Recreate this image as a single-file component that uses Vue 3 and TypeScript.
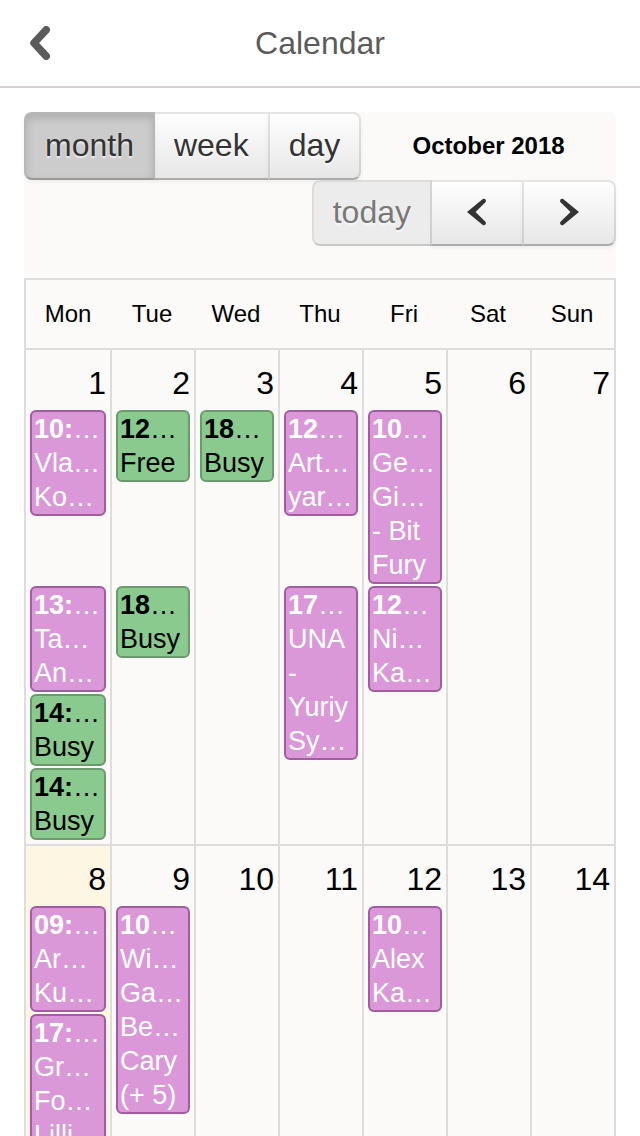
<script setup lang="ts">
import { ref } from 'vue'

interface CalendarEvent {
  time: string
  lines: string[]
  kind: 'meeting' | 'slot'
}

interface Cell {
  day: number
  event?: CalendarEvent
  span: number
}

interface Week {
  days: number[]
  rows: Cell[][]
}

type View = 'month' | 'week' | 'day'

const TODAY = 8
const views: View[] = ['month', 'week', 'day']
const weekdays = ['Mon', 'Tue', 'Wed', 'Thu', 'Fri', 'Sat', 'Sun']
const view = ref<View>('month')

const meeting = (time: string, ...lines: string[]): CalendarEvent => ({ time, lines, kind: 'meeting' })
const slot = (time: string, ...lines: string[]): CalendarEvent => ({ time, lines, kind: 'slot' })

const events: Record<number, CalendarEvent[]> = {
  1: [
    meeting('10:', 'Vla…', 'Ko…'),
    meeting('13:', 'Ta…', 'An…'),
    slot('14:', 'Busy'),
    slot('14:', 'Busy'),
  ],
  2: [slot('12', 'Free'), slot('18', 'Busy')],
  3: [slot('18', 'Busy')],
  4: [meeting('12', 'Art…', 'yar…'), meeting('17', 'UNA', '-', 'Yuriy', 'Sy…')],
  5: [meeting('10', 'Ge…', 'Gi…', '- Bit', 'Fury'), meeting('12', 'Ni…', 'Ka…')],
  8: [meeting('09:', 'Ar…', 'Ku…'), meeting('17:', 'Gr…', 'Fo…', 'Lilli')],
  9: [meeting('10', 'Wi…', 'Ga…', 'Be…', 'Cary', '(+ 5)')],
  12: [meeting('10', 'Alex', 'Ka…')],
}

// The last event of a day spans the remaining rows of its week.
function buildWeek(first: number): Week {
  const days = weekdays.map((_, i) => first + i)
  const depth = Math.max(1, ...days.map((d) => events[d]?.length ?? 0))
  const rows: Cell[][] = []
  for (let r = 0; r < depth; r++) {
    const row: Cell[] = []
    for (const day of days) {
      const list = events[day] ?? []
      const last = Math.max(list.length - 1, 0)
      if (r > last) continue
      row.push({ day, event: list[r], span: r === last ? depth - r : 1 })
    }
    rows.push(row)
  }
  return { days, rows }
}

const weeks = [buildWeek(1), buildWeek(8)]
</script>

<template>
  <div class="page">
    <header class="navbar">
      <button class="back" type="button" aria-label="Back">
        <svg width="20" height="34" viewBox="0 0 20 34" aria-hidden="true">
          <path d="M16.200 3.800 L4 17 L16.200 30.200" />
        </svg>
      </button>
      <h1>Calendar</h1>
    </header>

    <main class="calendar">
      <div class="toolbar">
        <div class="toolbar-row">
          <div class="group views">
            <button
              v-for="v in views"
              :key="v"
              type="button"
              class="btn"
              :class="{ active: view === v }"
              :aria-pressed="view === v"
              @click="view = v"
            >{{ v }}</button>
          </div>
          <h2>October 2018</h2>
        </div>
        <div class="group nav">
          <button type="button" class="btn" disabled>today</button>
          <button type="button" class="btn arrow" aria-label="Previous month">
            <svg width="20" height="28" viewBox="0 0 20 28" aria-hidden="true">
              <path d="M0 14 L15.500 1.200 C17.500 -0.200 19.500 1.500 18.700 4 L8.500 14 L18.700 24 C19.500 26.500 17.500 28.200 15.500 26.800 Z" />
            </svg>
          </button>
          <button type="button" class="btn arrow" aria-label="Next month">
            <svg width="20" height="28" viewBox="0 0 20 28" aria-hidden="true">
              <path d="M20 14 L4.500 1.200 C2.500 -0.200 0.500 1.500 1.300 4 L11.500 14 L1.300 24 C0.500 26.500 2.500 28.200 4.500 26.800 Z" />
            </svg>
          </button>
        </div>
      </div>

      <table>
        <thead>
          <tr>
            <th v-for="name in weekdays" :key="name" scope="col">{{ name }}</th>
          </tr>
        </thead>
        <tbody v-for="week in weeks" :key="week.days[0]">
          <tr>
            <td v-for="day in week.days" :key="day" class="number" :class="{ today: day === TODAY }">{{ day }}</td>
          </tr>
          <tr v-for="(row, r) in week.rows" :key="r">
            <td
              v-for="cell in row"
              :key="cell.day"
              :rowspan="cell.span"
              class="slot-cell"
              :class="{ today: cell.day === TODAY }"
            >
              <a v-if="cell.event" href="#" class="event" :class="cell.event.kind">
                <span class="line"><b>{{ cell.event.time }}</b>…</span>
                <span v-for="(line, i) in cell.event.lines" :key="i" class="line">{{ line }}</span>
              </a>
            </td>
          </tr>
        </tbody>
      </table>
    </main>
  </div>
</template>

<style>
body {
  margin: 0;
  background: #fff;
}
</style>

<style scoped>
.page {
  height: 100vh;
  overflow: hidden;
  font-family: "Liberation Sans", Arial, sans-serif;
  color: #000;
}

.navbar {
  display: grid;
  grid-template-columns: 80px 1fr 80px;
  align-items: center;
  height: 86px;
  border-bottom: 2px solid #d5d1d3;
}

.navbar h1 {
  margin: 0;
  font-size: 32px;
  font-weight: 400;
  line-height: 36px;
  text-align: center;
  color: #5b5b5b;
}

.back {
  display: flex;
  align-items: center;
  justify-content: center;
  height: 86px;
  padding: 0;
  border: 0;
  background: none;
}

.back path {
  fill: none;
  stroke: #5b5b5b;
  stroke-width: 7.6;
  stroke-linecap: round;
  stroke-linejoin: round;
}

.calendar {
  padding: 24px;
}

.toolbar {
  padding-bottom: 32px;
  border-radius: 8px 8px 0 0;
  background: #fbfaf9;
}

.toolbar-row {
  display: flex;
  align-items: center;
}

.toolbar h2 {
  flex: 1;
  margin: 0;
  font-size: 24px;
  line-height: 28px;
  text-align: center;
}

.group {
  display: flex;
}

.views {
  height: 68px;
}

.nav {
  justify-content: flex-end;
  height: 66px;
}

.btn {
  display: flex;
  align-items: center;
  justify-content: center;
  padding: 0 19px 2px;
  border: 2px solid;
  border-color: rgba(0, 0, 0, 0.1) rgba(0, 0, 0, 0.1) rgba(0, 0, 0, 0.25);
  background: #f5f5f5 linear-gradient(#fff, #e6e6e6) border-box;
  box-shadow: inset 0 2px 0 rgba(255, 255, 255, 0.2), 0 2px 4px rgba(0, 0, 0, 0.05);
  color: #333;
  font: inherit;
  font-size: 32px;
  text-shadow: 0 2px 2px rgba(255, 255, 255, 0.75);
}

.btn + .btn {
  margin-left: -2px;
}

.btn:first-child {
  border-radius: 8px 0 0 8px;
}

.btn:last-child {
  border-radius: 0 8px 8px 0;
}

.btn.active {
  position: relative;
  background: #ccc;
  box-shadow: inset 0 4px 8px rgba(0, 0, 0, 0.15), 0 2px 4px rgba(0, 0, 0, 0.05);
}

.btn:disabled {
  background: #e6e6e6;
  box-shadow: none;
  opacity: 0.65;
}

.arrow {
  width: 94px;
}

.arrow path {
  fill: #333;
}

table {
  width: 100%;
  table-layout: fixed;
  border-collapse: separate;
  border-spacing: 0;
  border: solid #ddd;
  border-width: 0 2px 2px 0;
  background: #fbfaf9;
}

th {
  height: 68px;
  padding: 0;
  border-top: 2px solid #ddd;
  font-size: 24px;
  font-weight: 400;
  line-height: 28px;
}

th:first-child {
  box-sizing: border-box;
  width: 86px;
  border-left: 2px solid #ddd;
}

td {
  padding: 0 4px;
  border-left: 2px solid #ddd;
  vertical-align: top;
}

.number {
  padding: 15px 4px 9px;
  border-top: 2px solid #ddd;
  font-size: 32px;
  line-height: 36px;
  text-align: right;
}

.today {
  background: #fdf6e2;
}

tbody tr:last-child .slot-cell {
  padding-bottom: 2px;
}

.event {
  display: block;
  margin-bottom: 2px;
  padding: 0 2px;
  border: 2px solid;
  border-radius: 6px;
  font-size: 27px;
  line-height: 34px;
  text-decoration: none;
}

.line {
  display: block;
  white-space: nowrap;
}

.meeting {
  border-color: #a35ba1;
  background: #da98d9;
  color: #fff;
}

.slot {
  border-color: #6b9a6f;
  background: #8aca8f;
  color: #000;
}
</style>
